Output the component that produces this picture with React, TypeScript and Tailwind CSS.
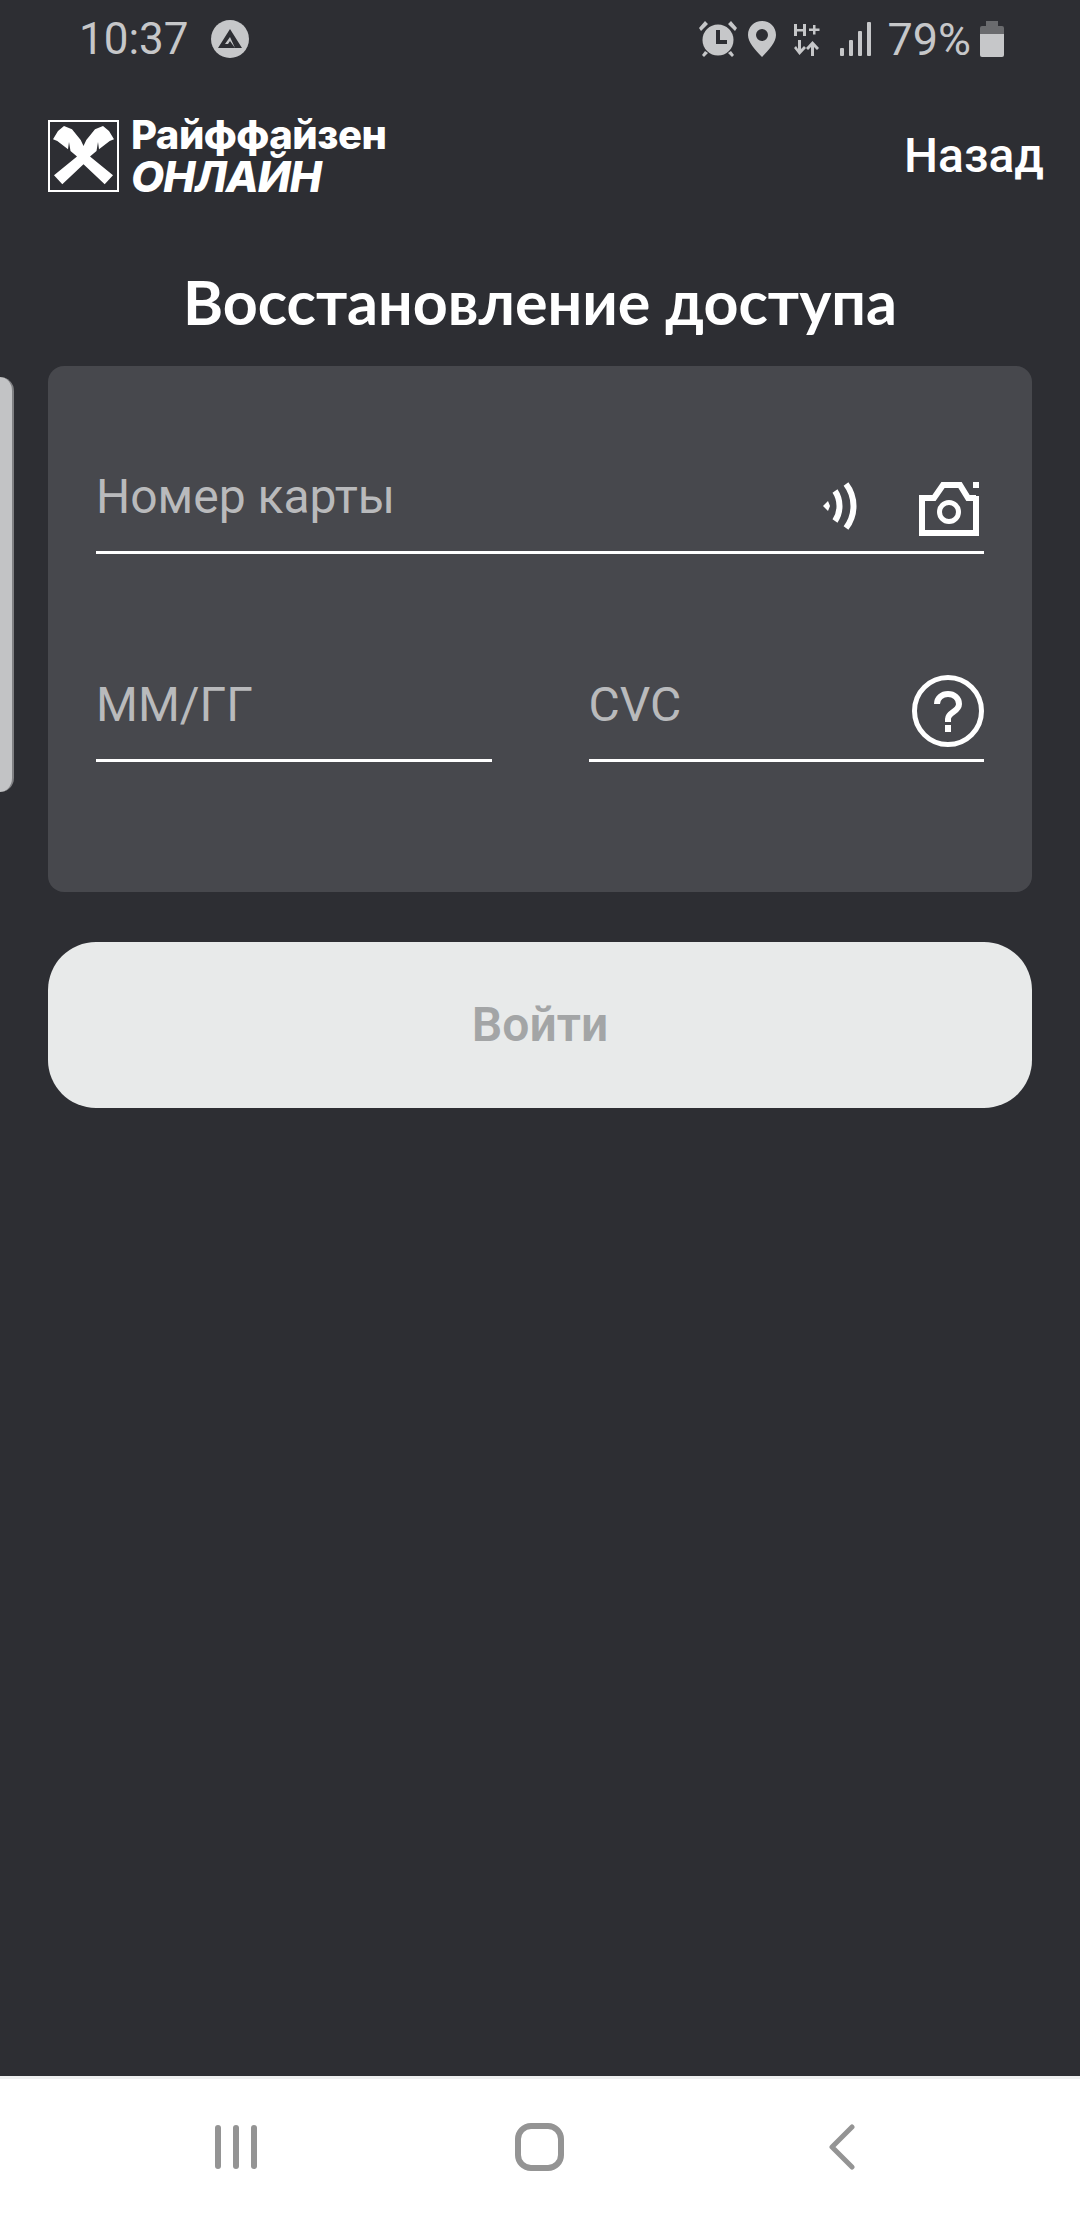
const roboto = "font-['Roboto',sans-serif]";

function StatusIcons() {
  return (
    <div className="flex items-center">
      {/* alarm */}
      <svg width="38" height="36" viewBox="0 0 38 36" className="mr-[11px]" fill="#c6c7c9">
        <circle cx="19" cy="19" r="15.5" />
        <path d="M6 0l3 3-7 7-2-3zM32 0l-3 3 7 7 2-3zM6 30l3 2-4 4-2-2zM32 30l-3 2 4 4 2-2z" />
        <path d="M17 9h4v10h7v4H17z" fill="#2d2e33" />
      </svg>
      {/* pin */}
      <svg width="28" height="36" viewBox="0 0 28 36" className="mr-[18px]" fill="#c6c7c9">
        <path fillRule="evenodd" d="M14 0c8 0 14 6 14 14 0 7-7 15-14 22C7 29 0 21 0 14 0 6 6 0 14 0zm0 8a6 6 0 100 12 6 6 0 000-12z" />
      </svg>
      {/* H+ */}
      <div className="mr-[19px] flex w-[27px] flex-col items-center">
        <svg width="27" height="36" viewBox="0 0 27 36" fill="#c6c7c9">
          <path d="M0 3h3v5h6V3h3v12H9v-4.500H3V15H0zM15 7.500h4V4h2.500v3.500H25.500V10h-4v3.500H19V10h-4z" />
          <path d="M4 19h3v9l3-3 2 2-6.500 7L0 27l2-2 2 3zM20 35h-3v-9l-3 3-2-2 6.500-7 6.500 7-2 2-3-3z" />
        </svg>
      </div>
      {/* signal */}
      <svg width="31" height="34" viewBox="0 0 31 34" className="mr-[16px]" fill="#c6c7c9">
        <rect x="0" y="26" width="4" height="8" rx="1" />
        <rect x="9" y="18" width="4" height="16" rx="1" />
        <rect x="18" y="9" width="4" height="25" rx="1" />
        <rect x="27" y="0" width="4" height="34" rx="1" />
      </svg>
      <span className={`${roboto} mr-[9px] text-[45px] leading-none text-[#c6c7c9]`}>79%</span>
      {/* battery */}
      <svg width="24" height="36" viewBox="0 0 24 36">
        <path d="M6 0h12v5h4a2 2 0 012 2v6H0V7a2 2 0 012-2h4z" fill="#6a6b6e" />
        <path d="M0 13h24v21a2 2 0 01-2 2H2a2 2 0 01-2-2z" fill="#c6c7c9" />
      </svg>
    </div>
  );
}

function Logo() {
  return (
    <div className="flex items-start">
      <svg width="71" height="72" viewBox="0 0 71 72">
        <rect x="1" y="1" width="69" height="70" fill="none" stroke="#fff" strokeWidth="2" />
        <path
          fill="#fff"
          d="M35.500 26L32.700 20 24 9.300 16 6 10 11 5 19.300 9.300 21 20 29.300 21 22 22.500 31 29 36.500 6 55.300 14.300 64.300 35.500 44.300 56.700 64.300 65 55.300 42 36.500 48.500 31 50 22 51 29.300 61.700 21 66 19.300 61 11 55 6 47 9.300 38.300 20z"
        />
      </svg>
      <div className="ml-[12px] flex flex-col font-['Inter',sans-serif] font-extrabold text-white">
        <span className="mt-[-5px] text-[40px] leading-[40px] tracking-[-0.5px]">Райффайзен</span>
        <span className="mt-[1px] text-[43px] leading-[40px] tracking-[-1px] italic">ОНЛАЙН</span>
      </div>
    </div>
  );
}

function NfcIcon() {
  return (
    <svg width="34" height="48" viewBox="0 0 34 48" fill="none" stroke="#fff" strokeWidth="6">
      <path d="M0 24l5-5 2 5-2 5z" fill="#fff" stroke="none" />
      <path d="M12 9c6 9 6 21 0 30" />
      <path d="M23 2c10 13 10 31 0 44" />
    </svg>
  );
}

function CameraIcon() {
  return (
    <svg width="60" height="54" viewBox="0 0 60 54" fill="none" stroke="#fff" strokeWidth="6">
      <path d="M57 14v37H3V16h12l9-13h17l8 13h8" strokeLinejoin="miter" />
      <circle cx="30" cy="30" r="9.500" strokeWidth="5" />
      <rect x="54" y="0" width="6" height="6" fill="#fff" stroke="none" />
    </svg>
  );
}

function HelpIcon() {
  return (
    <svg width="72" height="72" viewBox="0 0 72 72" fill="none" stroke="#fff" strokeWidth="5">
      <circle cx="36" cy="36" r="33.500" />
      <path d="M25 29c0-6 5-10 11-10s11 4 11 10c0 8-11 8-11 15v3" strokeWidth="6" />
      <rect x="33" y="50" width="6" height="7" fill="#fff" stroke="none" />
    </svg>
  );
}

function NavBar() {
  return (
    <div className="relative flex h-[144px] shrink-0 items-center border-t-[3px] border-[#eef0f0] bg-white pb-[6px]">
      <div className="ml-[215px] flex gap-[12px]">
        <div className="h-[44px] w-[6px] rounded-full bg-[#949494]" />
        <div className="h-[44px] w-[6px] rounded-full bg-[#949494]" />
        <div className="h-[44px] w-[6px] rounded-full bg-[#949494]" />
      </div>
      <div className="ml-[258px] h-[48px] w-[49px] rounded-[16px] border-[6px] border-[#949494]" />
      <svg width="28" height="46" viewBox="0 0 28 46" className="ml-[263px]" fill="none" stroke="#949494" strokeWidth="5" strokeLinecap="round" strokeLinejoin="round">
        <path d="M25 3L5 23l20 20" />
      </svg>
    </div>
  );
}

export default function App() {
  return (
    <div className="relative flex h-[2220px] w-[1080px] flex-col overflow-hidden bg-[#2d2e33]">
      {/* edge panel handle */}
      <div className="absolute top-[377px] left-0 h-[415px] w-[14px] rounded-r-[14px] border-r-2 border-[#808184] bg-[#c2c3c5]" />

      <div className="flex h-[78px] shrink-0 items-center justify-between pr-[76px] pl-[79px]">
        <div className="flex items-center">
          <span className={`${roboto} text-[44px] leading-none text-[#c6c7c9]`}>10:37</span>
          <svg width="38" height="38" viewBox="0 0 38 38" className="ml-[22px]">
            <circle cx="19" cy="19" r="19" fill="#c6c7c9" />
            <path fillRule="evenodd" d="M19 9L31 28H7zM19 17l-5 7h3l2-3 5 7z" fill="#2d2e33" />
          </svg>
        </div>
        <StatusIcons />
      </div>

      <div className="mt-[42px] flex items-start justify-between pr-[36px] pl-[48px]">
        <Logo />
        <span className={`${roboto} mt-[8px] text-[48px] leading-[56px] font-medium text-white`}>Назад</span>
      </div>

      <h1 className="mt-[70px] text-center font-['Lato','Open_Sans',sans-serif] text-[61px] leading-[72px] font-bold text-white">
        Восстановление доступа
      </h1>

      <div className="mx-[48px] mt-[28px] rounded-[16px] bg-[#47484d] px-[48px] pt-[107px] pb-[130px]">
        <div className="flex h-[81px] items-start justify-between border-b-[3px] border-white">
          <span className={`${roboto} mt-[-2px] text-[48px] leading-[52px] text-[#b9babc]`}>Номер карты</span>
          <div className="mt-[9px] mr-[5px] flex items-start gap-[62px]">
            <NfcIcon />
            <CameraIcon />
          </div>
        </div>
        <div className="mt-[127px] flex gap-[97px]">
          <div className="flex h-[81px] flex-1 items-start border-b-[3px] border-white">
            <span className={`${roboto} mt-[-2px] text-[48px] leading-[52px] text-[#b9babc]`}>ММ/ГГ</span>
          </div>
          <div className="flex h-[81px] flex-1 items-start justify-between border-b-[3px] border-white">
            <span className={`${roboto} mt-[-2px] text-[48px] leading-[52px] text-[#b9babc]`}>CVC</span>
            <div className="mt-[-6px]">
              <HelpIcon />
            </div>
          </div>
        </div>
      </div>

      <button className={`${roboto} mx-[48px] mt-[50px] h-[166px] rounded-[48px] bg-[#e8eaea] text-[48px] font-semibold text-[#a3a5a6]`}>
        Войти
      </button>

      <div className="flex-1" />
      <NavBar />
    </div>
  );
}
